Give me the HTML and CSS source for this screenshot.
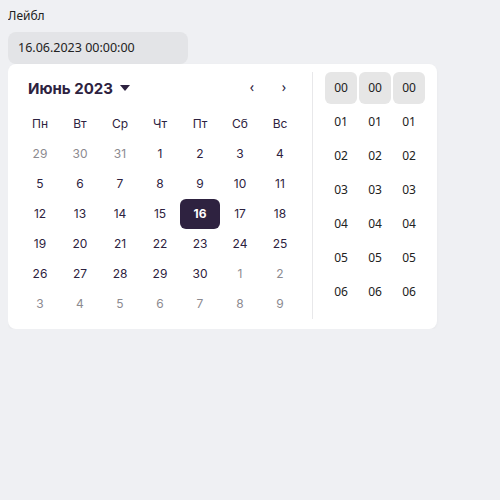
FILE: index.html
```html
<!DOCTYPE html>
<html lang="ru">
<head>
    <meta charset="UTF-8">
    <title>Date picker</title>
    <link rel="stylesheet" href="styles.css">
</head>
<body>

<div class="field">
    <div class="field-label">Лейбл</div>
    <div class="field-input">16.06.2023 00:00:00</div>
</div>

<!-- Dropdown -->
<div class="picker">
    <div class="calendar">
        <div class="cal-header">
            <div class="cal-title">Июнь 2023
                <svg class="caret" width="10" height="6" viewBox="0 0 10 6"><path d="M0 0h10L5 6z" fill="#2d2240"/></svg>
            </div>
            <div class="cal-nav">
                <span class="nav-btn">&#8249;</span>
                <span class="nav-btn">&#8250;</span>
            </div>
        </div>
        <div class="weekdays">
            <div>Пн</div><div>Вт</div><div>Ср</div><div>Чт</div><div>Пт</div><div>Сб</div><div>Вс</div>
        </div>
        <div class="days">
            <div class="day other">29</div><div class="day other">30</div><div class="day other">31</div><div class="day">1</div><div class="day">2</div><div class="day">3</div><div class="day">4</div>
            <div class="day">5</div><div class="day">6</div><div class="day">7</div><div class="day">8</div><div class="day">9</div><div class="day">10</div><div class="day">11</div>
            <div class="day">12</div><div class="day">13</div><div class="day">14</div><div class="day">15</div><div class="day selected">16</div><div class="day">17</div><div class="day">18</div>
            <div class="day">19</div><div class="day">20</div><div class="day">21</div><div class="day">22</div><div class="day">23</div><div class="day">24</div><div class="day">25</div>
            <div class="day">26</div><div class="day">27</div><div class="day">28</div><div class="day">29</div><div class="day">30</div><div class="day other">1</div><div class="day other">2</div>
            <div class="day other">3</div><div class="day other">4</div><div class="day other">5</div><div class="day other">6</div><div class="day other">7</div><div class="day other">8</div><div class="day other">9</div>
        </div>
    </div>

    <div class="time">
        <div class="time-col">
            <div class="time-cell active">00</div><div class="time-cell">01</div><div class="time-cell">02</div><div class="time-cell">03</div><div class="time-cell">04</div><div class="time-cell">05</div><div class="time-cell">06</div>
        </div>
        <div class="time-col">
            <div class="time-cell active">00</div><div class="time-cell">01</div><div class="time-cell">02</div><div class="time-cell">03</div><div class="time-cell">04</div><div class="time-cell">05</div><div class="time-cell">06</div>
        </div>
        <div class="time-col">
            <div class="time-cell active">00</div><div class="time-cell">01</div><div class="time-cell">02</div><div class="time-cell">03</div><div class="time-cell">04</div><div class="time-cell">05</div><div class="time-cell">06</div>
        </div>
    </div>
</div>

</body>
</html>
```

FILE: styles.css
```css
/* Page */
body {
    margin: 8px;
    background-color: #eff0f3;
    font-family: "Noto Sans", Arial, sans-serif;
    color: #2d2240;
}

.field {
    width: 180px;
}

.field-label {
    font-size: 12px;
    line-height: 16px;
    margin-bottom: 8px;
    color: #222;
}

.field-input {
    height: 32px;
    line-height: 32px;
    padding: 0 10px;
    border-radius: 8px;
    background-color: #e3e4e7;
    font-size: 12.5px;
    color: #222;
}

/* Dropdown */
.picker {
    display: inline-flex;
    padding: 8px 12px 10px 12px;
    background-color: #fff;
    border-radius: 8px;
    box-shadow: 0 1px 3px rgba(0, 0, 0, 0.04);
}

.calendar {
    width: 280px;
    padding-right: 12px;
    font-family: Inter, "Noto Sans", sans-serif;
}

.cal-header {
    display: flex;
    justify-content: space-between;
    align-items: center;
    height: 32px;
    margin-bottom: 5px;
}

.cal-title {
    display: flex;
    align-items: center;
    gap: 7px;
    padding-left: 8px;
    font-size: 15px;
    font-weight: 700;
    color: #2d2240;
}

.cal-nav {
    display: flex;
}

.nav-btn {
    width: 32px;
    height: 32px;
    line-height: 30px;
    text-align: center;
    font-family: "Noto Sans", sans-serif;
    font-size: 14px;
    color: #2d2240;
}

.weekdays,
.days {
    display: grid;
    grid-template-columns: repeat(7, 40px);
}

.weekdays div {
    height: 30px;
    line-height: 30px;
    text-align: center;
    font-size: 12px;
    color: #2d2240;
}

.day {
    height: 30px;
    line-height: 30px;
    text-align: center;
    font-size: 12px;
    color: #2d2240;
    border-radius: 6px;
}

.day.other {
    color: #8c8a90;
}

.day.selected {
    background-color: #2e2240;
    color: #fff;
    font-weight: 700;
}

/* Time columns */
.time {
    display: flex;
    gap: 2px;
    padding-left: 12px;
    border-left: 1px solid #e8e8ea;
}

.time-col {
    width: 32px;
}

.time-cell {
    height: 32px;
    margin-bottom: 2px;
    line-height: 32px;
    text-align: center;
    font-size: 12px;
    color: #222;
    border-radius: 6px;
}

.time-cell.active {
    background-color: #e6e6e6;
}
```
